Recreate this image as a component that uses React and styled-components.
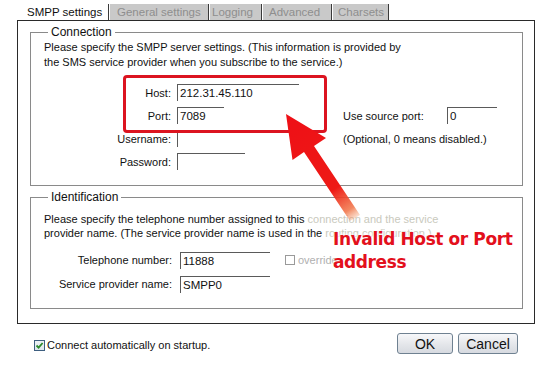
import styled, { createGlobalStyle } from "styled-components";

const Global = createGlobalStyle`
  body {
    margin: 0;
    background: #ffffff;
    font-family: "Liberation Sans", Arial, sans-serif;
    font-size: 11px;
    color: #111;
  }
`;

const Page = styled.div`
  position: relative;
  width: 548px;
  height: 380px;
  padding-top: 4px;
  box-sizing: border-box;
  background: #fff;
  overflow: hidden;
`;

const Tabs = styled.div`
  display: flex;
  margin-left: 25px;
  height: 16px;
`;

const Tab = styled.div`
  width: ${(p) => p.$w}px;
  height: 16px;
  line-height: 16px;
  font-size: 11.5px;
  padding-left: ${(p) => p.$pl}px;
  margin-right: 1px;
  box-sizing: border-box;
  border-right: 1px solid #3a3a3a;
  background: ${(p) => (p.$active ? "#fff" : "#c9c9c9")};
  color: ${(p) => (p.$active ? "#111" : "#8e8e8e")};
  white-space: nowrap;
  overflow: hidden;
`;

const Panel = styled.div`
  margin: 0 13px 0 17px;
  border: 1px solid #2a2a2a;
  padding: 4px 11px 12px 12px;
  height: 304px;
  box-sizing: border-box;
  display: flex;
  flex-direction: column;
  gap: 4px;
`;

const Group = styled.fieldset`
  margin: 0;
  border: 1px solid #8a8a8a;
  padding: ${(p) => p.$pad};
  min-width: 0;
`;

const Legend = styled.legend`
  padding: 0 3px;
  margin-left: 4px;
  font-size: 12px;
  line-height: 14px;
  color: #111;
`;

const Desc = styled.div`
  font-size: 11px;
  line-height: ${(p) => p.$lh || 15}px;
  color: #111;
`;

const Faded = styled.span`
  color: #c9c9bd;
`;

const Form = styled.div`
  display: grid;
  grid-template-columns: ${(p) => p.$cols};
  grid-auto-rows: ${(p) => p.$row}px;
  align-items: center;
  margin-top: ${(p) => p.$mt}px;
  font-size: 11px;
`;

const Label = styled.div`
  text-align: right;
  padding-right: ${(p) => p.$gap || 6}px;
  white-space: nowrap;
`;

const Plain = styled.div`
  white-space: nowrap;
  grid-column: ${(p) => p.$span || "auto"};
`;

const Field = styled.div`
  width: ${(p) => p.$w}px;
  height: 17px;
  line-height: 17px;
  box-sizing: border-box;
  border-top: 1px solid #5a5a5a;
  border-left: 1px solid #5a5a5a;
  padding-left: 2px;
  font-size: 11.5px;
  color: #111;
`;

const Inline = styled.div`
  display: flex;
  align-items: center;
  gap: 3px;
  margin-left: 15px;
  color: #b0b0b0;
`;

const SmallBox = styled.span`
  width: 10px;
  height: 10px;
  border: 1px solid #9a9a9a;
  box-sizing: border-box;
`;

const Footer = styled.div`
  display: flex;
  justify-content: space-between;
  align-items: center;
  margin: 9px 30px 0 34px;
  height: 21px;
`;

const Check = styled.label`
  display: flex;
  align-items: center;
  gap: 2px;
  font-size: 11px;
  margin-top: 3px;
`;

const CheckBox = styled.span`
  width: 11px;
  height: 11px;
  box-sizing: border-box;
  border: 1px solid #3e5f80;
  background: linear-gradient(#eef2f6, #dde6ee);
  display: flex;
  align-items: center;
  justify-content: center;
`;

const Buttons = styled.div`
  display: flex;
  gap: 5px;
`;

const Button = styled.button`
  width: ${(p) => p.$w}px;
  height: 21px;
  border: 1px solid #6f8191;
  border-radius: 3px;
  background: linear-gradient(#f7f8fa, #e4e6ea 55%, #d7dae0);
  font-family: "Liberation Sans", Arial, sans-serif;
  font-size: 14px;
  color: #111;
  padding: 0;
`;

const HighlightBox = styled.div`
  position: absolute;
  left: 123px;
  top: 75px;
  width: 204px;
  height: 58px;
  box-sizing: border-box;
  border: 3px solid #dc1420;
  border-radius: 4px;
`;

const Overlay = styled.svg`
  position: absolute;
  left: 0;
  top: 0;
  pointer-events: none;
`;

const Note = styled.div`
  position: absolute;
  left: 333px;
  top: 228px;
  font-family: "Comic Sans MS", "DejaVu Sans", sans-serif;
  font-weight: bold;
  font-size: 17px;
  letter-spacing: -0.4px;
  line-height: 23px;
  color: #e3101c;
  text-shadow: 0 0 3px #fff, 0 0 3px #fff;
`;

export default function App() {
  return (
    <Page>
      <Global />
      <Tabs>
        <Tab $active $w={84} $pl={2}>SMPP settings</Tab>
        <Tab $w={99} $pl={7}>General settings</Tab>
        <Tab $w={52} $pl={2}>Logging</Tab>
        <Tab $w={69} $pl={6}>Advanced</Tab>
        <Tab $w={56} $pl={5}>Charsets</Tab>
      </Tabs>
      <Panel>
        <Group $pad="1px 10px 12px 13px">
          <Legend>Connection</Legend>
          <Desc>
            Please specify the SMPP server settings. (This information is provided by
            <br />
            the SMS service provider when you subscribe to the service.)
          </Desc>
          <Form $cols="133px 166px 104px 1fr" $row={23} $mt={11}>
            <Label>Host:</Label>
            <Field $w={122}>212.31.45.110</Field>
            <div />
            <div />
            <Label>Port:</Label>
            <Field $w={47}>7089</Field>
            <Plain>Use source port:</Plain>
            <Field $w={50}>0</Field>
            <Label>Username:</Label>
            <Field $w={1} />
            <Plain $span="3 / 5">(Optional, 0 means disabled.)</Plain>
            <Label>Password:</Label>
            <Field $w={68} />
          </Form>
        </Group>
        <Group $pad="8px 10px 12px 13px">
          <Legend>Identification</Legend>
          <Desc $lh={14}>
            Please specify the telephone number assigned to this{" "}
            <Faded>connection and the service</Faded>
            <br />
            provider name. (The service provider name is used in the{" "}
            <Faded>routing configuration.)</Faded>
          </Desc>
          <Form $cols="136px 90px 1fr" $row={24} $mt={8}>
            <Label $gap={8}>Telephone number:</Label>
            <Field $w={90}>11888</Field>
            <Inline>
              <SmallBox />
              override
            </Inline>
            <Label $gap={8}>Service provider name:</Label>
            <Field $w={90}>SMPP0</Field>
          </Form>
        </Group>
      </Panel>
      <Footer>
        <Check>
          <CheckBox>
            <svg width="9" height="9" viewBox="0 0 9 9">
              <path d="M1.5 4.5 L3.6 6.6 L7.6 2" fill="none" stroke="#2c8a2c" strokeWidth="1.8" />
            </svg>
          </CheckBox>
          Connect automatically on startup.
        </Check>
        <Buttons>
          <Button $w={56}>OK</Button>
          <Button $w={60}>Cancel</Button>
        </Buttons>
      </Footer>

      <HighlightBox />
      <Note>
        Invalid Host or Port
        <br />
        address
      </Note>
      <Overlay width="548" height="380" viewBox="0 0 548 380">
        <defs>
          <linearGradient id="arrowFade" x1="286" y1="114" x2="357" y2="220" gradientUnits="userSpaceOnUse">
            <stop offset="0" stopColor="#ee0f16" />
            <stop offset="0.7" stopColor="#ee1a16" />
            <stop offset="0.9" stopColor="#f06a3a" stopOpacity="0.8" />
            <stop offset="1" stopColor="#f3a070" stopOpacity="0.2" />
          </linearGradient>
        </defs>
        <polygon
          points="286,114 326,138 314,146 360,215 350,221 304,152 292.5,160"
          fill="url(#arrowFade)"
        />
      </Overlay>
    </Page>
  );
}
